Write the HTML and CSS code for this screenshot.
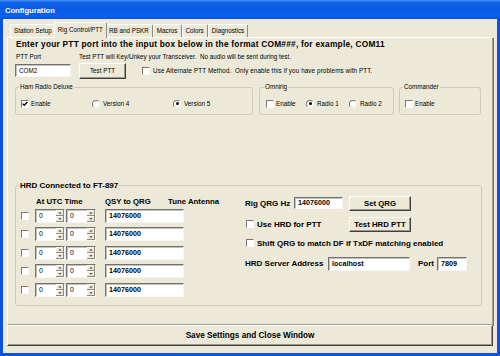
FILE: index.html
```html
<!DOCTYPE html>
<html>
<head>
<meta charset="utf-8">
<title>Configuration</title>
<link rel="stylesheet" href="styles.css">
</head>
<body>
<div class="window">
  <div class="titlebar">Configuration</div>
  <div class="client">
    <div class="tabs">
      <div class="tab">Station Setup</div>
      <div class="tab active">Rig Control/PTT</div>
      <div class="tab">RB and PSKR</div>
      <div class="tab">Macros</div>
      <div class="tab">Colors</div>
      <div class="tab">Diagnostics</div>
    </div>
    <div class="panel">
      <div class="heading">Enter your PTT port into the input box below in the format COM###, for example, COM11</div>
      <div class="row-labels"><span class="lbl-ptt">PTT Port</span><span>Test PTT will Key/Unkey your Transceiver.&nbsp; No audio will be sent during test.</span></div>
      <div class="row-ctrls">
        <div class="field com">COM2</div>
        <div class="btn testptt">Test PTT</div>
        <span class="cb alt"></span>
        <span class="cblabel">Use Alternate PTT Method.&nbsp; Only enable this if you have problems with PTT.</span>
      </div>
      <div class="groups">
        <fieldset class="grp g-hrd">
          <legend>Ham Radio Deluxe</legend>
          <div class="opts">
            <div class="opt w71"><span class="cb"><svg width="6" height="6" viewBox="0 0 6 6"><polyline points="0.6,2.6 2.2,4.3 5.4,1" fill="none" stroke="#000" stroke-width="1.3"/></svg></span>Enable</div>
            <div class="opt w81"><span class="rb"></span>Version 4</div>
            <div class="opt"><span class="rb on"><span class="dot"></span></span>Version 5</div>
          </div>
        </fieldset>
        <fieldset class="grp g-omni">
          <legend>Omnirig</legend>
          <div class="opts">
            <div class="opt w40"><span class="cb"></span>Enable</div>
            <div class="opt w43"><span class="rb on"><span class="dot"></span></span>Radio 1</div>
            <div class="opt"><span class="rb"></span>Radio 2</div>
          </div>
        </fieldset>
        <fieldset class="grp g-cmd">
          <legend>Commander</legend>
          <div class="opts">
            <div class="opt"><span class="cb"></span>Enable</div>
          </div>
        </fieldset>
      </div>
      <fieldset class="grp g-main">
        <legend>HRD Connected to FT-897</legend>
        <div class="main">
          <div class="leftcol">
            <div class="hdr"><span class="h1">At UTC Time</span><span class="h2">QSY to QRG</span><span>Tune Antenna</span></div>
            <div class="rows">
              <div class="r"><span class="cb"></span><div class="spin"><span class="val">0</span><span class="arr"><svg width="8" height="12" viewBox="0 0 8 12"><rect x="0" y="0" width="8" height="12" fill="#ece9d8"/><path d="M0 0H8M0 0V12M0 6.5H8" stroke="#fff" stroke-width="1"/><path d="M7.5 0V12M0 5.5H8M0 11.5H8" stroke="#8c8a80" stroke-width="1"/><polygon points="4,2 2.5,3.6 5.5,3.6" fill="#222"/><polygon points="2.5,8.2 5.5,8.2 4,9.8" fill="#222"/></svg></span></div><div class="spin s2"><span class="val">0</span><span class="arr"><svg width="8" height="12" viewBox="0 0 8 12"><rect x="0" y="0" width="8" height="12" fill="#ece9d8"/><path d="M0 0H8M0 0V12M0 6.5H8" stroke="#fff" stroke-width="1"/><path d="M7.5 0V12M0 5.5H8M0 11.5H8" stroke="#8c8a80" stroke-width="1"/><polygon points="4,2 2.5,3.6 5.5,3.6" fill="#222"/><polygon points="2.5,8.2 5.5,8.2 4,9.8" fill="#222"/></svg></span></div><div class="field qsy">14076000</div></div>
              <div class="r"><span class="cb"></span><div class="spin"><span class="val">0</span><span class="arr"><svg width="8" height="12" viewBox="0 0 8 12"><rect x="0" y="0" width="8" height="12" fill="#ece9d8"/><path d="M0 0H8M0 0V12M0 6.5H8" stroke="#fff" stroke-width="1"/><path d="M7.5 0V12M0 5.5H8M0 11.5H8" stroke="#8c8a80" stroke-width="1"/><polygon points="4,2 2.5,3.6 5.5,3.6" fill="#222"/><polygon points="2.5,8.2 5.5,8.2 4,9.8" fill="#222"/></svg></span></div><div class="spin s2"><span class="val">0</span><span class="arr"><svg width="8" height="12" viewBox="0 0 8 12"><rect x="0" y="0" width="8" height="12" fill="#ece9d8"/><path d="M0 0H8M0 0V12M0 6.5H8" stroke="#fff" stroke-width="1"/><path d="M7.5 0V12M0 5.5H8M0 11.5H8" stroke="#8c8a80" stroke-width="1"/><polygon points="4,2 2.5,3.6 5.5,3.6" fill="#222"/><polygon points="2.5,8.2 5.5,8.2 4,9.8" fill="#222"/></svg></span></div><div class="field qsy">14076000</div></div>
              <div class="r"><span class="cb"></span><div class="spin"><span class="val">0</span><span class="arr"><svg width="8" height="12" viewBox="0 0 8 12"><rect x="0" y="0" width="8" height="12" fill="#ece9d8"/><path d="M0 0H8M0 0V12M0 6.5H8" stroke="#fff" stroke-width="1"/><path d="M7.5 0V12M0 5.5H8M0 11.5H8" stroke="#8c8a80" stroke-width="1"/><polygon points="4,2 2.5,3.6 5.5,3.6" fill="#222"/><polygon points="2.5,8.2 5.5,8.2 4,9.8" fill="#222"/></svg></span></div><div class="spin s2"><span class="val">0</span><span class="arr"><svg width="8" height="12" viewBox="0 0 8 12"><rect x="0" y="0" width="8" height="12" fill="#ece9d8"/><path d="M0 0H8M0 0V12M0 6.5H8" stroke="#fff" stroke-width="1"/><path d="M7.5 0V12M0 5.5H8M0 11.5H8" stroke="#8c8a80" stroke-width="1"/><polygon points="4,2 2.5,3.6 5.5,3.6" fill="#222"/><polygon points="2.5,8.2 5.5,8.2 4,9.8" fill="#222"/></svg></span></div><div class="field qsy">14076000</div></div>
              <div class="r"><span class="cb"></span><div class="spin"><span class="val">0</span><span class="arr"><svg width="8" height="12" viewBox="0 0 8 12"><rect x="0" y="0" width="8" height="12" fill="#ece9d8"/><path d="M0 0H8M0 0V12M0 6.5H8" stroke="#fff" stroke-width="1"/><path d="M7.5 0V12M0 5.5H8M0 11.5H8" stroke="#8c8a80" stroke-width="1"/><polygon points="4,2 2.5,3.6 5.5,3.6" fill="#222"/><polygon points="2.5,8.2 5.5,8.2 4,9.8" fill="#222"/></svg></span></div><div class="spin s2"><span class="val">0</span><span class="arr"><svg width="8" height="12" viewBox="0 0 8 12"><rect x="0" y="0" width="8" height="12" fill="#ece9d8"/><path d="M0 0H8M0 0V12M0 6.5H8" stroke="#fff" stroke-width="1"/><path d="M7.5 0V12M0 5.5H8M0 11.5H8" stroke="#8c8a80" stroke-width="1"/><polygon points="4,2 2.5,3.6 5.5,3.6" fill="#222"/><polygon points="2.5,8.2 5.5,8.2 4,9.8" fill="#222"/></svg></span></div><div class="field qsy">14076000</div></div>
              <div class="r"><span class="cb"></span><div class="spin"><span class="val">0</span><span class="arr"><svg width="8" height="12" viewBox="0 0 8 12"><rect x="0" y="0" width="8" height="12" fill="#ece9d8"/><path d="M0 0H8M0 0V12M0 6.5H8" stroke="#fff" stroke-width="1"/><path d="M7.5 0V12M0 5.5H8M0 11.5H8" stroke="#8c8a80" stroke-width="1"/><polygon points="4,2 2.5,3.6 5.5,3.6" fill="#222"/><polygon points="2.5,8.2 5.5,8.2 4,9.8" fill="#222"/></svg></span></div><div class="spin s2"><span class="val">0</span><span class="arr"><svg width="8" height="12" viewBox="0 0 8 12"><rect x="0" y="0" width="8" height="12" fill="#ece9d8"/><path d="M0 0H8M0 0V12M0 6.5H8" stroke="#fff" stroke-width="1"/><path d="M7.5 0V12M0 5.5H8M0 11.5H8" stroke="#8c8a80" stroke-width="1"/><polygon points="4,2 2.5,3.6 5.5,3.6" fill="#222"/><polygon points="2.5,8.2 5.5,8.2 4,9.8" fill="#222"/></svg></span></div><div class="field qsy">14076000</div></div>
            </div>
          </div>
          <div class="rightcol">
            <div class="ra"><span class="blbl w49">Rig QRG Hz</span><div class="field qrg">14076000</div><div class="btn bbtn">Set QRG</div></div>
            <div class="rbrow"><span class="cb"></span><span class="blbl w92">Use HRD for PTT</span><div class="btn bbtn">Test HRD PTT</div></div>
            <div class="rc"><span class="cb"></span><span class="blbl">Shift QRG to match DF if TxDF matching enabled</span></div>
            <div class="rd"><span class="blbl w83">HRD Server Address</span><div class="field host">localhost</div><span class="blbl port">Port</span><div class="field portv">7809</div></div>
          </div>
        </div>
      </fieldset>
    </div>
    <div class="btn save">Save Settings and Close Window</div>
  </div>
</div>
</body>
</html>
```

FILE: styles.css
```css
* { box-sizing: border-box; }
html, body { margin: 0; padding: 0; }
body {
  width: 500px; height: 356px; overflow: hidden;
  font-family: "Liberation Sans", Arial, sans-serif;
  font-size: 6.3px; color: #000;
}
.window {
  width: 500px; height: 356px;
  display: flex; flex-direction: column;
  background: #0b52dc;
}
.titlebar {
  height: 19px; padding: 2px 0 0 5px; line-height: 17px;
  color: #fff; font-weight: bold; font-size: 7.6px;
  background: linear-gradient(#4a94f6 0, #1262e8 12%, #0a5ae6 45%, #0b60ee 85%, #0753dc 100%);
}
.client {
  flex: 1; margin: 0 3px 3px;
  background: #ece9d8;
  padding: 3px 4px 0;
  display: flex; flex-direction: column;
}
.tabs { display: flex; align-items: flex-end; height: 15px; padding-left: 3px; }
.tab {
  height: 13px; line-height: 12px; padding: 0 3px; white-space: nowrap;
  border-top: 1px solid #fff; border-left: 1px solid #fff; border-right: 1px solid #8d8b80;
  border-radius: 2px 2px 0 0;
}
.tab.active {
  position: relative; z-index: 1;
  height: 16px; margin: 0 -2px -1px; line-height: 14px;
  background: #ece9d8;
}
.panel {
  height: 288px;
  border: 1px solid; border-color: #fff #a19f94 #a19f94 #fff;
  box-shadow: 1px 1px 0 #76746a;
  padding: 1px 0 0 7px;
}
.heading { font-weight: bold; font-size: 8.3px; letter-spacing: 0.25px; line-height: 10px; margin-left: 1px; white-space: nowrap; }
.row-labels { margin-top: 4px; height: 8px; line-height: 8px; display: flex; margin-left: 1px; white-space: nowrap; }
.lbl-ptt { width: 63px; }
.row-ctrls { margin-top: 1px; height: 17px; display: flex; align-items: center; white-space: nowrap; }

.field {
  background: #fff; height: 13px; line-height: 11px;
  border: 1px solid; border-color: #727272 #f6f6f6 #f6f6f6 #727272;
  box-shadow: inset 1px 1px 0 #c4c2b8;
  padding-left: 3px; white-space: nowrap; overflow: hidden;
}
.com { width: 56px; }
.btn {
  display: flex; align-items: center; justify-content: center;
  background: #ece9d8; white-space: nowrap;
  border: 1px solid; border-color: #fff #404040 #404040 #fff;
  box-shadow: inset -1px -1px 0 #9a988d;
}
.testptt { margin-left: 8px; width: 47px; height: 16px; }
.cb {
  flex: none; width: 8px; height: 8px; background: #fff;
  border: 1px solid; border-color: #787878 #fbfbfb #fbfbfb #787878;
  display: inline-flex; align-items: center; justify-content: center;
}
.cb.alt { margin-left: 16px; }
.cblabel { margin-left: 3px; letter-spacing: 0.1px; }

.groups { margin-top: 4px; display: flex; align-items: flex-start; }
.grp {
  margin: 0; min-width: 0;
  border: 1px solid #cdcbbd; border-radius: 3px;
  padding: 8.5px 5px 6px;
}
.grp legend { padding: 0 1px; margin-left: -2px; line-height: 8px; white-space: nowrap; }
.g-hrd { width: 238px; margin-right: 6px; }
.g-omni { width: 135px; margin-right: 5px; padding-left: 6px; }
.g-cmd { width: 82px; }
.opts { display: flex; height: 8px; }
.opt { display: flex; align-items: center; height: 8px; white-space: nowrap; }
.opt .cb { margin-right: 2px; }
.opt .rb { margin-right: 3px; }
.w71 { width: 71px; }
.w81 { width: 81px; }
.w40 { width: 40px; }
.w43 { width: 43px; }
.rb {
  flex: none; width: 8px; height: 8px; border-radius: 50%; background: #fff;
  border: 1px solid; border-color: #7a7a7a #f2f2f2 #f2f2f2 #7a7a7a;
  display: inline-flex; align-items: center; justify-content: center;
}
.dot { width: 3px; height: 3px; border-radius: 50%; background: #000; }

.g-main { width: 467px; margin-top: 67px; padding: 8px 5px 8px; }
.g-main legend { font-weight: bold; font-size: 8px; }
.main { display: flex; align-items: flex-start; }
.leftcol { width: 224px; flex: none; }
.hdr { display: flex; height: 8px; line-height: 8px; font-weight: bold; font-size: 7.8px; white-space: nowrap; }
.h1 { margin-left: 15px; width: 69px; }
.h2 { width: 63px; }
.rows { margin-top: 3px; display: flex; flex-direction: column; gap: 4.5px; }
.r { display: flex; align-items: center; height: 14px; }
.spin {
  display: flex; width: 30px; height: 14px; background: #fff; margin-left: 6px;
  border: 1px solid; border-color: #727272 #f6f6f6 #f6f6f6 #727272;
  box-shadow: inset 1px 1px 0 #c4c2b8;
}
.spin.s2 { margin-left: 1px; }
.spin .val { flex: 1; padding-left: 3px; line-height: 12px; font-size: 6.8px; }
.spin .arr { width: 8px; height: 12px; display: block; }
.spin svg { display: block; }
.qsy { margin-left: 9px; width: 79px; height: 14px; line-height: 12px; font-weight: bold; font-size: 7.2px; }

.rightcol { margin-top: -2px; display: flex; flex-direction: column; }
.blbl { font-weight: bold; font-size: 8px; white-space: nowrap; }
.w49 { width: 49px; }
.w92 { width: 92px; }
.w83 { width: 83px; }
.ra, .rbrow, .rc, .rd { display: flex; align-items: center; }
.ra { height: 15px; }
.rbrow { height: 15px; margin-top: 6px; }
.rc { height: 15px; margin-top: 4px; }
.rd { height: 14px; margin-top: 6px; }
.rbrow .cb, .rc .cb { margin-left: 1px; margin-right: 3px; }
.qrg { width: 49px; height: 12px; line-height: 10px; font-weight: bold; font-size: 7.2px; }
.bbtn { margin-left: 6px; width: 62px; height: 15px; font-weight: bold; font-size: 7.8px; }
.rbrow .bbtn { margin-left: 0; }
.host { width: 82px; height: 14px; line-height: 12px; font-weight: bold; font-size: 7.2px; }
.port { margin-left: 8px; width: 19px; }
.portv { width: 30px; height: 14px; line-height: 12px; font-weight: bold; font-size: 7.2px; }

.save { height: 21px; font-weight: bold; font-size: 8.2px; }
```
